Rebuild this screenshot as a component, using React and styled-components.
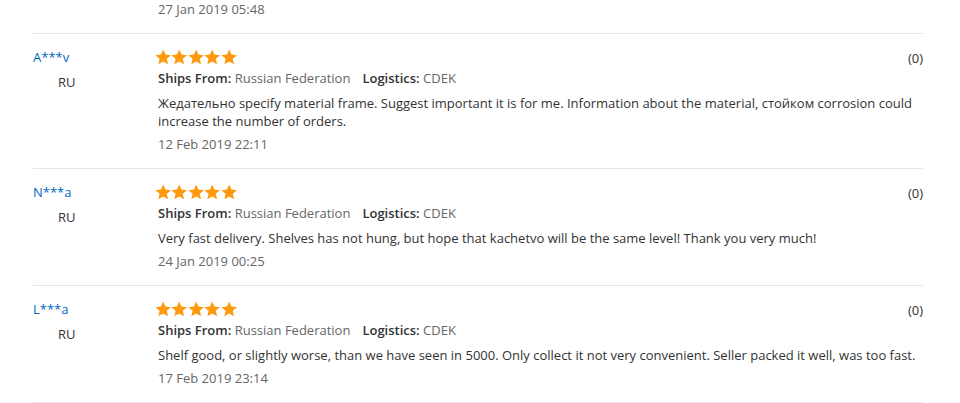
import React from "react";
import styled, { createGlobalStyle } from "styled-components";

const Global = createGlobalStyle`
  html, body { margin: 0; padding: 0; background: #fff; }
  body { font-family: "Open Sans", "Liberation Sans", sans-serif; font-size: 13px; color: #333; }
`;

const Page = styled.div`
  padding: 0 37px 0 33px;
`;

const TopDate = styled.div`
  padding: 1px 0 0 125px;
  line-height: 16px;
  color: #666;
  border-bottom: 1px solid #e6e6e6;
  box-sizing: border-box;
  height: 34px;
`;

const Review = styled.div`
  display: grid;
  grid-template-columns: 123px 1fr;
  border-bottom: 1px solid #e6e6e6;
  padding: 14px 0 14px;
`;

const UserCol = styled.div`
  display: flex;
  flex-direction: column;
`;

const Name = styled.a`
  color: #0066c0;
  line-height: 18px;
  text-decoration: none;
`;

const Country = styled.div`
  margin: 7px 0 0 25px;
  color: #333;
  line-height: 18px;
`;

const Main = styled.div`
  grid-column: 2;
  grid-row: 1;
  display: flex;
  flex-direction: column;
  padding-left: 2px;
  max-width: 762px;
`;

const Stars = styled.div`
  display: flex;
  height: 18px;
  align-items: center;
  margin-left: -3px;
`;

const Info = styled.div`
  margin-top: 3px;
  line-height: 18px;
  color: #666;
  display: flex;
  gap: 12px;
`;

const Label = styled.span`
  color: #333;
  font-weight: 600;
`;

const Body = styled.div`
  margin-top: 7px;
  line-height: 18px;
  color: #333;
`;

const DateLine = styled.div`
  margin-top: 5px;
  margin-bottom: 1px;
  line-height: 18px;
  color: #666;
`;

const Votes = styled.div`
  grid-column: 2;
  grid-row: 1;
  justify-self: end;
  align-self: start;
  line-height: 18px;
  padding-top: 1px;
  color: #333;
`;

const Star = () => (
  <svg width="16.4" height="16.4" viewBox="0 0 24 24">
    <path
      fill="#ff9a0e"
      d="M12 0.8l3.3 7.4 8.1.8-6.1 5.4 1.8 8L12 18.3l-7.1 4.1 1.8-8L0.6 9l8.1-.8z"
    />
  </svg>
);

const reviews = [
  {
    name: "A***v",
    text:
      "Жедательно specify material frame. Suggest important it is for me. Information about the material, стойком corrosion could increase the number of orders.",
    date: "12 Feb 2019 22:11",
  },
  {
    name: "N***a",
    text:
      "Very fast delivery. Shelves has not hung, but hope that kachetvo will be the same level! Thank you very much!",
    date: "24 Jan 2019 00:25",
  },
  {
    name: "L***a",
    text:
      "Shelf good, or slightly worse, than we have seen in 5000. Only collect it not very convenient. Seller packed it well, was too fast.",
    date: "17 Feb 2019 23:14",
  },
];

export default function App() {
  return (
    <>
      <Global />
      <Page>
        <TopDate>27 Jan 2019 05:48</TopDate>
        {reviews.map((r) => (
          <Review key={r.name}>
            <UserCol>
              <Name href="#">{r.name}</Name>
              <Country>RU</Country>
            </UserCol>
            <Main>
              <Stars>
                {[0, 1, 2, 3, 4].map((i) => (
                  <Star key={i} />
                ))}
              </Stars>
              <Info>
                <span>
                  <Label>Ships From:</Label> Russian Federation
                </span>
                <span>
                  <Label>Logistics:</Label> CDEK
                </span>
              </Info>
              <Body>{r.text}</Body>
              <DateLine>{r.date}</DateLine>
            </Main>
            <Votes>(0)</Votes>
          </Review>
        ))}
      </Page>
    </>
  );
}
